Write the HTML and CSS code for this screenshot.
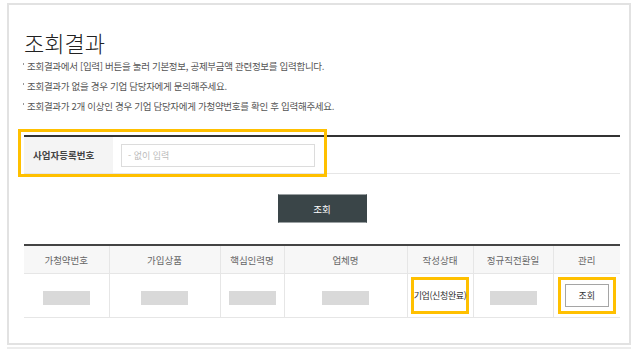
FILE: index.html
```html
<!DOCTYPE html>
<html lang="ko">
<head>
  <meta charset="UTF-8" />
  <meta name="viewport" content="width=device-width, initial-scale=1" />
  <title>조회결과</title>
  <link rel="stylesheet" href="styles.css">
</head>
<body>

  <div class="panel">
    <h1 class="title">조회결과</h1>
    <ul class="notice">
      <li>조회결과에서 [입력] 버튼을 눌러 기본정보, 공제부금액 관련정보를 입력합니다.</li>
      <li>조회결과가 없을 경우 기업 담당자에게 문의해주세요.</li>
      <li>조회결과가 2개 이상인 경우 기업 담당자에게 가청약번호를 확인 후 입력해주세요.</li>
    </ul>

    <!-- 검색 -->
    <div class="search">
      <div class="search-row">
        <div class="search-label">사업자등록번호</div>
        <div class="search-field">
          <input type="text" placeholder="- 없이 입력" />
        </div>
      </div>
      <span class="highlight"></span>
    </div>

    <div class="actions">
      <button class="btn-dark">조회</button>
    </div>

    <!-- 조회결과 -->
    <table class="result">
      <colgroup>
        <col style="width:85px"><col style="width:111px"><col style="width:64px"><col style="width:123px"><col style="width:66px"><col style="width:80px"><col>
      </colgroup>
      <thead>
        <tr>
          <th>가청약번호</th>
          <th>가입상품</th>
          <th>핵심인력명</th>
          <th>업체명</th>
          <th>작성상태</th>
          <th>정규직전환일</th>
          <th>관리</th>
        </tr>
      </thead>
      <tbody>
        <tr>
          <td><span class="blank"></span></td>
          <td><span class="blank"></span></td>
          <td><span class="blank"></span></td>
          <td><span class="blank"></span></td>
          <td><div class="mark">기업(신청완료)</div></td>
          <td><span class="blank"></span></td>
          <td><div class="mark"><button class="btn-line">조회</button></div></td>
        </tr>
      </tbody>
    </table>
  </div>
  <div class="strip"></div>

</body>
</html>
```

FILE: styles.css
```css
body {
  margin: 0;
  background: #fff;
  font-family: "Noto Sans CJK KR", "Noto Sans", sans-serif;
  color: #333;
}
.panel {
  box-sizing: border-box;
  width: 624px;
  height: 342px;
  margin: 3px 0 0 7px;
  padding: 24px 0 0 15px;
  border: 2px solid #e2e2e2;
}
.strip {
  width: 624px;
  height: 2px;
  margin: 2px 0 0 7px;
  background: #ececec;
}
.title {
  margin: 0;
  font-size: 22px;
  line-height: 26px;
  font-weight: 300;
  color: #222;
}
.notice {
  list-style: none;
  margin: 1px 0 0;
  padding: 0;
}
.notice li {
  position: relative;
  padding-left: 3px;
  font-size: 9.5px;
  line-height: 20px;
  color: #555;
  letter-spacing: -0.3px;
}
.notice li::before {
  content: "";
  position: absolute;
  left: -1px;
  top: 7px;
  width: 1px;
  height: 2px;
  background: #999;
}

/* search */
.search {
  position: relative;
  width: 596px;
  margin-top: 19px;
}
.search-row {
  display: flex;
  height: 36px;
  border-top: 2px solid #333;
  border-bottom: 1px solid #e6e6e6;
}
.search-label {
  width: 89px;
  box-sizing: border-box;
  padding-left: 9px;
  display: flex;
  align-items: center;
  background: #f4f4f4;
  font-size: 9.5px;
  font-weight: bold;
  color: #444;
}
.search-field {
  display: flex;
  align-items: center;
  padding-left: 8px;
}
.search-field input {
  box-sizing: border-box;
  width: 194px;
  height: 23px;
  padding: 0 6px;
  border: 1px solid #dcdcdc;
  font-family: inherit;
  font-size: 9px;
  outline: none;
}
.search-field input::placeholder {
  color: #bbb;
}
.highlight {
  position: absolute;
  left: -6px;
  top: -6px;
  width: 309px;
  height: 48px;
  box-sizing: border-box;
  border: 3px solid #ffc000;
}

.actions {
  width: 596px;
  display: flex;
  justify-content: center;
  margin-top: 20px;
}
.btn-dark {
  width: 89px;
  height: 29px;
  background: #3a4548;
  border: 1px solid #9aa0a2;
  border-left-color: #3a4548;
  border-right-color: #3a4548;
  color: #fff;
  font-family: inherit;
  font-size: 9.5px;
  cursor: pointer;
}

/* result table */
.result {
  width: 596px;
  margin-top: 21px;
  border-collapse: collapse;
  table-layout: fixed;
  border-top: 2px solid #444;
}
.result th {
  height: 27px;
  padding: 0;
  background: #f7f7f7;
  font-size: 9.5px;
  font-weight: normal;
  color: #666;
  border-left: 1px solid #e6e6e6;
  border-bottom: 1px solid #e6e6e6;
}
.result td {
  height: 43px;
  padding: 0;
  text-align: center;
  border-left: 1px solid #e6e6e6;
  border-bottom: 1px solid #e6e6e6;
}
.result th:first-child, .result td:first-child {
  border-left: none;
}
.blank {
  display: inline-block;
  width: 47px;
  height: 14px;
  background: #d9d9d9;
  vertical-align: middle;
}
.mark {
  box-sizing: border-box;
  width: 58px;
  height: 37px;
  margin: 0 auto;
  border: 3px solid #ffc000;
  display: flex;
  align-items: center;
  justify-content: center;
  font-size: 9px;
  color: #333;
  letter-spacing: -0.4px;
  white-space: nowrap;
}
.btn-line {
  width: 44px;
  height: 23px;
  background: #fff;
  border: 1px solid #a5a5a5;
  font-family: inherit;
  font-size: 9px;
  color: #333;
  cursor: pointer;
}
```
